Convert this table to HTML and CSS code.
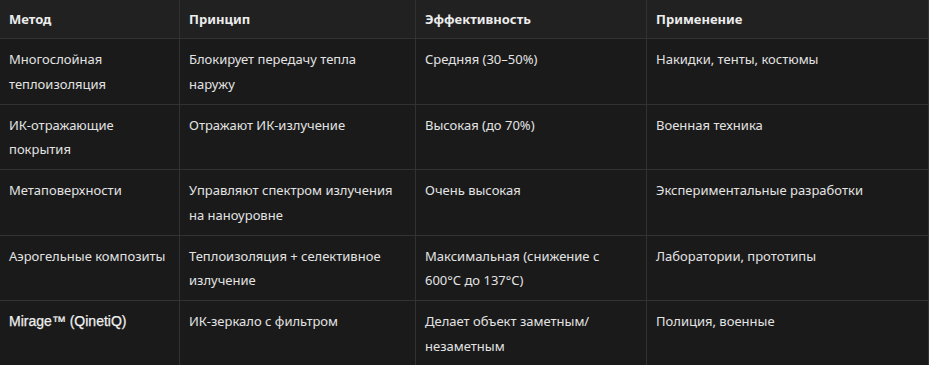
FILE: index.html
```html
<!DOCTYPE html>
<html lang="ru">
<head>
<meta charset="utf-8">
<link rel="stylesheet" href="styles.css">
</head>
<body>
<table class="data-table">
  <colgroup>
    <col class="c1"><col class="c2"><col class="c3"><col class="c4">
  </colgroup>
  <thead>
    <tr>
      <th>Метод</th>
      <th>Принцип</th>
      <th>Эффективность</th>
      <th>Применение</th>
    </tr>
  </thead>
  <tbody>
    <tr>
      <td>Многослойная теплоизоляция</td>
      <td>Блокирует передачу тепла наружу</td>
      <td>Средняя (30–50%)</td>
      <td>Накидки, тенты, костюмы</td>
    </tr>
    <tr>
      <td>ИК-отражающие покрытия</td>
      <td>Отражают ИК-излучение</td>
      <td>Высокая (до 70%)</td>
      <td>Военная техника</td>
    </tr>
    <tr>
      <td>Метаповерхности</td>
      <td>Управляют спектром излучения на наноуровне</td>
      <td>Очень высокая</td>
      <td>Экспериментальные разработки</td>
    </tr>
    <tr>
      <td>Аэрогельные композиты</td>
      <td>Теплоизоляция + селективное излучение</td>
      <td>Максимальная (снижение с 600°C до 137°C)</td>
      <td>Лаборатории, прототипы</td>
    </tr>
    <tr>
      <td><span class="latin">Mirage™ (QinetiQ)</span></td>
      <td>ИК-зеркало с фильтром</td>
      <td>Делает объект заметным/ незаметным</td>
      <td>Полиция, военные</td>
    </tr>
  </tbody>
</table>
</body>
</html>
```
FILE: styles.css
```css
html, body {
  margin: 0;
  padding: 0;
  background: #1a1a1a;
}
body {
  font-family: "Noto Sans", "Open Sans", sans-serif;
  font-size: 13px;
  color: #e3e3e3;
}
.data-table {
  table-layout: fixed;
  border-collapse: separate;
  border-spacing: 0;
  width: 929px;
}
.c1 { width: 180px; }
.c2 { width: 236px; }
.c3 { width: 231px; }
.c4 { width: 282px; }
.data-table th,
.data-table td {
  border-right: 1px solid #323232;
  border-bottom: 1px solid #323232;
  text-align: left;
  vertical-align: top;
  padding: 8px 10px 8px 9px;
  line-height: 24.25px;
}
.data-table th {
  background: #212121;
  font-weight: 700;
  color: #ececec;
  padding-top: 7px;
  padding-bottom: 7px;
}
.data-table td {
  background: #1a1a1a;
}
.latin {
  font-family: "Liberation Sans", Arial, sans-serif;
  font-size: 14px;
  color: #f0f0f0;
  -webkit-text-stroke: 0.25px #f0f0f0;
}
```
